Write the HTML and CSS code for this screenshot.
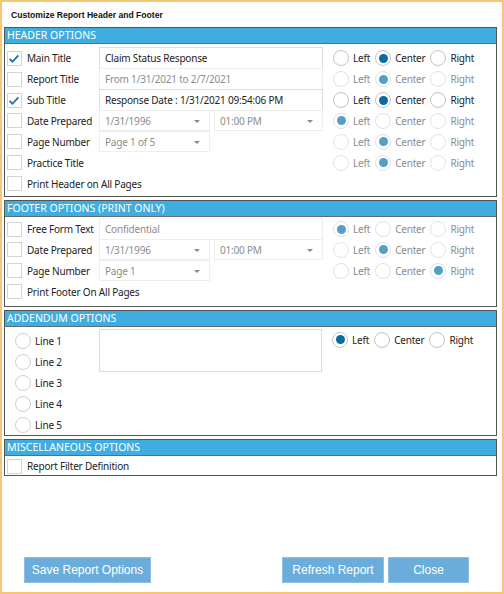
FILE: index.html
```html
<!DOCTYPE html>
<html lang="en">
<head>
    <meta charset="UTF-8">
    <title>Customize Report Header and Footer</title>
    <link rel="stylesheet" href="styles.css">
</head>
<body>
<div class="window">
    <div class="title">Customize Report Header and Footer</div>

    <!-- header options -->
    <div class="section">
        <div class="bar">HEADER OPTIONS</div>
        <div class="rows head">
            <div class="row">
                <span class="check"><svg viewBox="0 0 16 16"><path d="M3 8.5l3.2 3.2L13 4.5" /></svg></span>
                <span class="label">Main Title</span>
                <div class="field">Claim Status Response</div>
                <div class="align">
                    <span class="opt"><span class="radio"></span>Left</span>
                    <span class="opt"><span class="radio sel"></span>Center</span>
                    <span class="opt"><span class="radio"></span>Right</span>
                </div>
            </div>
            <div class="row">
                <span class="check"></span>
                <span class="label">Report Title</span>
                <div class="field off">From 1/31/2021 to 2/7/2021</div>
                <div class="align off">
                    <span class="opt"><span class="radio"></span>Left</span>
                    <span class="opt"><span class="radio sel"></span>Center</span>
                    <span class="opt"><span class="radio"></span>Right</span>
                </div>
            </div>
            <div class="row">
                <span class="check"><svg viewBox="0 0 16 16"><path d="M3 8.5l3.2 3.2L13 4.5" /></svg></span>
                <span class="label">Sub Title</span>
                <div class="field">Response Date : 1/31/2021 09:54:06 PM</div>
                <div class="align">
                    <span class="opt"><span class="radio"></span>Left</span>
                    <span class="opt"><span class="radio sel"></span>Center</span>
                    <span class="opt"><span class="radio"></span>Right</span>
                </div>
            </div>
            <div class="row">
                <span class="check"></span>
                <span class="label">Date Prepared</span>
                <div class="pair">
                    <div class="select date">1/31/1996<span class="arrow"></span></div>
                    <div class="select time">01:00 PM<span class="arrow"></span></div>
                </div>
                <div class="align off">
                    <span class="opt"><span class="radio sel"></span>Left</span>
                    <span class="opt"><span class="radio"></span>Center</span>
                    <span class="opt"><span class="radio"></span>Right</span>
                </div>
            </div>
            <div class="row">
                <span class="check"></span>
                <span class="label">Page Number</span>
                <div class="pair">
                    <div class="select date">Page 1 of 5<span class="arrow"></span></div>
                </div>
                <div class="align off">
                    <span class="opt"><span class="radio"></span>Left</span>
                    <span class="opt"><span class="radio sel"></span>Center</span>
                    <span class="opt"><span class="radio"></span>Right</span>
                </div>
            </div>
            <div class="row">
                <span class="check"></span>
                <span class="label">Practice Title</span>
                <div></div>
                <div class="align off">
                    <span class="opt"><span class="radio"></span>Left</span>
                    <span class="opt"><span class="radio sel"></span>Center</span>
                    <span class="opt"><span class="radio"></span>Right</span>
                </div>
            </div>
            <div class="row">
                <span class="check"></span>
                <span class="label wide">Print Header on All Pages</span>
            </div>
        </div>
    </div>

    <!-- footer options -->
    <div class="section">
        <div class="bar">FOOTER OPTIONS (PRINT ONLY)</div>
        <div class="rows foot">
            <div class="row">
                <span class="check"></span>
                <span class="label">Free Form Text</span>
                <div class="field off">Confidential</div>
                <div class="align off">
                    <span class="opt"><span class="radio sel"></span>Left</span>
                    <span class="opt"><span class="radio"></span>Center</span>
                    <span class="opt"><span class="radio"></span>Right</span>
                </div>
            </div>
            <div class="row">
                <span class="check"></span>
                <span class="label">Date Prepared</span>
                <div class="pair">
                    <div class="select date">1/31/1996<span class="arrow"></span></div>
                    <div class="select time">01:00 PM<span class="arrow"></span></div>
                </div>
                <div class="align off">
                    <span class="opt"><span class="radio"></span>Left</span>
                    <span class="opt"><span class="radio sel"></span>Center</span>
                    <span class="opt"><span class="radio"></span>Right</span>
                </div>
            </div>
            <div class="row">
                <span class="check"></span>
                <span class="label">Page Number</span>
                <div class="pair">
                    <div class="select date">Page 1<span class="arrow"></span></div>
                </div>
                <div class="align off">
                    <span class="opt"><span class="radio"></span>Left</span>
                    <span class="opt"><span class="radio"></span>Center</span>
                    <span class="opt"><span class="radio sel"></span>Right</span>
                </div>
            </div>
            <div class="row">
                <span class="check"></span>
                <span class="label wide">Print Footer On All Pages</span>
            </div>
        </div>
    </div>

    <!-- addendum -->
    <div class="section">
        <div class="bar">ADDENDUM OPTIONS</div>
        <div class="addendum">
            <div class="lines">
                <span class="opt"><span class="radio"></span>Line 1</span>
                <span class="opt"><span class="radio"></span>Line 2</span>
                <span class="opt"><span class="radio"></span>Line 3</span>
                <span class="opt"><span class="radio"></span>Line 4</span>
                <span class="opt"><span class="radio"></span>Line 5</span>
            </div>
            <div class="textbox"></div>
            <div class="align">
                <span class="opt"><span class="radio sel"></span>Left</span>
                <span class="opt"><span class="radio"></span>Center</span>
                <span class="opt"><span class="radio"></span>Right</span>
            </div>
        </div>
    </div>

    <!-- misc -->
    <div class="section">
        <div class="bar">MISCELLANEOUS OPTIONS</div>
        <div class="rows misc">
            <div class="row">
                <span class="check"></span>
                <span class="label wide">Report Filter Definition</span>
            </div>
        </div>
    </div>

    <div class="buttons">
        <button class="btn save">Save Report Options</button>
        <span class="spacer"></span>
        <button class="btn refresh">Refresh Report</button>
        <button class="btn close">Close</button>
    </div>
</div>
</body>
</html>
```

FILE: styles.css
```css
body {
    margin: 0;
    background-color: #ffffff;
    font-family: "Noto Sans", "Open Sans", sans-serif;
    font-size: 10px;
    letter-spacing: -0.2px;
    color: #222222;
}

.window {
    width: 504px;
    height: 594px;
    box-sizing: border-box;
    border: 2px solid #f6c872;
    padding: 0 5px 9px 2px;
    display: flex;
    flex-direction: column;
}

.title {
    font-family: "Liberation Sans", Arial, sans-serif;
    font-weight: bold;
    font-size: 8.6px;
    letter-spacing: 0;
    color: #111111;
    height: 25px;
    line-height: 26px;
    padding-left: 7px;
}

.section {
    border: 1px solid #555555;
    margin-bottom: 3px;
}

.bar {
    background-color: #3fade0;
    color: #ffffff;
    height: 15px;
    line-height: 15px;
    padding-left: 2px;
    font-size: 10.5px;
    letter-spacing: 0;
    border-bottom: 1px solid #6a6a6a;
}

.rows {
    padding: 3px 0 0 2px;
}

.rows.head {
    padding-bottom: 2px;
}

.rows.foot {
    padding-top: 1px;
    padding-bottom: 4px;
}

.row {
    display: grid;
    grid-template-columns: 20px 72px 224px 1fr;
    height: 21px;
    align-items: center;
}

.check {
    width: 15px;
    height: 15px;
    border: 1px solid #d4d4d4;
    box-sizing: border-box;
    background: #ffffff;
    display: flex;
}

.check svg {
    width: 15px;
    height: 15px;
    margin: -1px 0 0 -1px;
}

.check path {
    fill: none;
    stroke: #1b6ea8;
    stroke-width: 2;
}

.label {
    white-space: nowrap;
}

.label.wide {
    grid-column: 2 / 5;
}

.field {
    height: 22px;
    line-height: 20px;
    box-sizing: border-box;
    border: 1px solid #dedede;
    padding-left: 5px;
    white-space: nowrap;
    overflow: hidden;
}

.field.off,
.select {
    color: #8c8c8c;
    border-color: #eeeeee;
}

.pair {
    display: flex;
    gap: 4px;
}

.select {
    height: 21px;
    line-height: 20px;
    box-sizing: border-box;
    border: 1px solid #eeeeee;
    padding-left: 5px;
    position: relative;
}

.select.date {
    width: 111px;
}

.select.time {
    width: 109px;
}

.arrow {
    position: absolute;
    right: 9px;
    top: 9px;
    border-left: 3px solid transparent;
    border-right: 3px solid transparent;
    border-top: 3px solid #8a8a8a;
}

.align {
    display: flex;
    padding-left: 10px;
    align-self: stretch;
    align-items: center;
}

.opt {
    display: flex;
    align-items: center;
    margin-right: 5px;
    white-space: nowrap;
}

.radio {
    width: 16px;
    height: 16px;
    box-sizing: border-box;
    border: 1px solid #c4c4c4;
    border-radius: 50%;
    margin-right: 4px;
    display: flex;
    align-items: center;
    justify-content: center;
}

.radio.sel::after {
    content: "";
    width: 9px;
    height: 9px;
    border-radius: 50%;
    background-color: #0d6c9f;
}

.align.off .opt {
    color: #8c8c8c;
}

.align.off .radio {
    border-color: #e2e2e2;
}

.align.off .radio.sel::after {
    background-color: #549fc8;
}

.addendum {
    display: flex;
    padding-top: 2px;
    height: 108px;
    box-sizing: border-box;
}

.lines {
    width: 84px;
    padding-left: 10px;
    display: flex;
    flex-direction: column;
    padding-top: 1px;
}

.lines .opt {
    height: 21px;
}

.lines .radio {
    border-color: #cfcfcf;
    margin-right: 4px;
}

.textbox {
    width: 223px;
    height: 43px;
    box-sizing: border-box;
    border: 1px solid #dcdcdc;
}

.addendum .align {
    align-self: flex-start;
    height: 21px;
}

.misc {
    padding-top: 1px;
}

.misc .row {
    height: 18px;
}

.buttons {
    margin-top: auto;
    display: flex;
    padding-left: 20px;
}

.spacer {
    flex: 1;
}

.btn {
    background-color: #6badda;
    color: #ffffff;
    border: 1px solid #8cc0e4;
    font-family: "Liberation Sans", Arial, sans-serif;
    font-size: 12px;
    letter-spacing: 0;
    height: 26px;
    padding: 0;
    cursor: pointer;
}

.save {
    width: 127px;
}

.refresh {
    width: 102px;
    margin-right: 4px;
}

.close {
    width: 81px;
    margin-right: 28px;
}
```
